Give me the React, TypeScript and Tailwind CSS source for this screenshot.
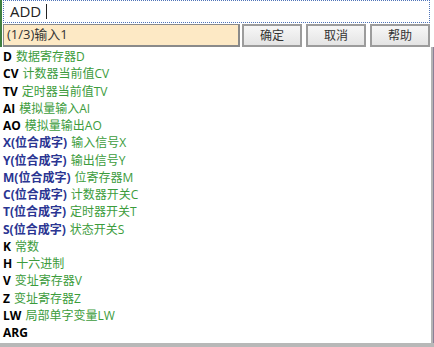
import React from "react";

type Item = { k: string; d: string; bit?: boolean };

const items: Item[] = [
  { k: "D", d: "数据寄存器D" },
  { k: "CV", d: "计数器当前值CV" },
  { k: "TV", d: "定时器当前值TV" },
  { k: "AI", d: "模拟量输入AI" },
  { k: "AO", d: "模拟量输出AO" },
  { k: "X(位合成字)", d: "输入信号X", bit: true },
  { k: "Y(位合成字)", d: "输出信号Y", bit: true },
  { k: "M(位合成字)", d: "位寄存器M", bit: true },
  { k: "C(位合成字)", d: "计数器开关C", bit: true },
  { k: "T(位合成字)", d: "定时器开关T", bit: true },
  { k: "S(位合成字)", d: "状态开关S", bit: true },
  { k: "K", d: "常数" },
  { k: "H", d: "十六进制" },
  { k: "V", d: "变址寄存器V" },
  { k: "Z", d: "变址寄存器Z" },
  { k: "LW", d: "局部单字变量LW" },
  { k: "ARG", d: "" },
];

const font = { fontFamily: '"Open Sans", "Noto Sans CJK SC", sans-serif' };

function Btn({ label }: { label: string }) {
  return (
    <div className="w-[60px] h-full border-2 border-[#9c9c9c] bg-gradient-to-b from-[#f7f7f7] to-[#e4e4e4] flex items-center justify-center text-[12px] text-[#333]">
      {label}
    </div>
  );
}

export default function App() {
  return (
    <div
      className="w-[434px] h-[347px] bg-white flex flex-col overflow-hidden"
      style={font}
    >
      <div className="flex flex-col border-l-[2px] border-[#3f7f3f] ml-0">
        <div className="h-[23px] pl-[1px] pr-[4px]">
          <div className="h-full border border-dotted border-[#4f74b8] flex items-center pl-[6px] text-[15px] text-[#222]">
            <span>ADD</span>
            <span className="ml-[5px] inline-block w-[1px] h-[15px] bg-[#222]" />
          </div>
        </div>
        <div className="h-[23px] mt-[1px] flex pl-[1px] pr-[4px]">
          <div className="w-[237px] h-full bg-[#fde9c5] border border-[#8a8a8a] border-r-2 border-b-2 flex items-center pl-[3px] text-[13px] text-[#333]">
            (1/3)输入1
          </div>
          <div className="ml-[2px] flex gap-[4px] h-full">
            <Btn label="确定" />
            <Btn label="取消" />
            <Btn label="帮助" />
          </div>
        </div>
      </div>
      <div className="flex-1 flex">
        <div className="flex-1 pt-[1px] pl-[3px] flex flex-col">
          {items.map((it) => (
            <div key={it.k} className="h-[17.25px] leading-[17.25px] text-[12px] whitespace-nowrap flex">
              <span className={it.bit ? "font-bold text-[#2a3592]" : "font-bold text-black"}>{it.k}</span>
              {it.d && <span className="ml-[4px] text-[#3c9c3c]">{it.d}</span>}
            </div>
          ))}
        </div>
        <div className="w-[2px] bg-[#b4b4b4]" />
        <div className="w-[1px] bg-[#8a8098]" />
      </div>
      <div className="h-[4px] bg-[#b8b8b8]" />
    </div>
  );
}
